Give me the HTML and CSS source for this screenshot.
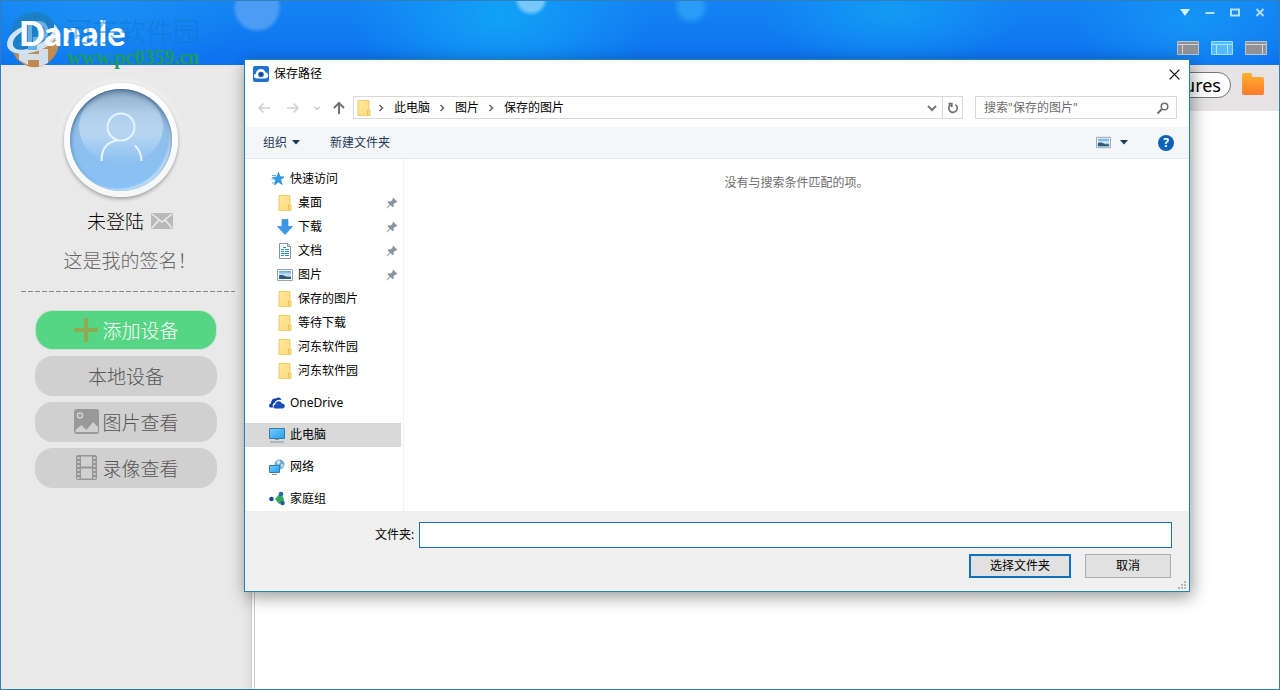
FILE: index.html
```html
<!DOCTYPE html>
<html lang="zh-CN">
<head>
<meta charset="utf-8">
<title>Danale</title>
<link rel="stylesheet" href="styles.css">
</head>
<body>
<svg class="defs" aria-hidden="true">
  <defs>
    <linearGradient id="g-folder" x1="0" y1="0" x2="1" y2="1"><stop offset="0" stop-color="#ffeaa0"/><stop offset="1" stop-color="#fcd978"/></linearGradient>
    <linearGradient id="g-orange" x1="0" y1="0" x2="0" y2="1"><stop offset="0" stop-color="#ffb12b"/><stop offset="1" stop-color="#ff7a2e"/></linearGradient>
    <linearGradient id="g-screen" x1="0" y1="0" x2="1" y2="1"><stop offset="0" stop-color="#6fcdfb"/><stop offset="1" stop-color="#2a9df0"/></linearGradient>
    <linearGradient id="g-photo" x1="0" y1="0" x2="0" y2="1"><stop offset="0" stop-color="#5f9edb"/><stop offset=".5" stop-color="#d8ecf7"/><stop offset="1" stop-color="#2d5f86"/></linearGradient>
    <linearGradient id="g-gloss" x1="0" y1="0" x2="0" y2="1"><stop offset="0" stop-color="#fff" stop-opacity=".1"/><stop offset=".6" stop-color="#fff" stop-opacity=".35"/><stop offset="1" stop-color="#fff" stop-opacity="0"/></linearGradient>
  </defs>
  <symbol id="folder" viewBox="0 0 16 16"><path d="M2 .5h11v9.500h1V15.500H2z" fill="url(#g-folder)" stroke="#e9cb6c"/><path d="M11.500 15V10.500h2" fill="none" stroke="#e6c25c"/></symbol>
  <symbol id="picture" viewBox="0 0 16 16"><path d="M.5 2.500h15v11H.5z" fill="#fff" stroke="#8fa3b5"/><path d="M2 4h12v8H2z" fill="url(#g-photo)"/><path d="M2 8.500c3-1 5 0 7 1s3 .2 5 .7V12H2z" fill="#2b5a7c"/></symbol>
  <symbol id="pin" viewBox="0 0 12 12"><path d="M7.300.8l4 4-1 .8-.7-.3-2 2 .1 2.200-1 .8-2.200-2.200L1 11.600l-.6-.5 3.300-3.700L1.500 5.200l.9-1 2.300.2 2-2-.3-.8z" fill="#8795a3"/></symbol>
  <symbol id="chev" viewBox="0 0 8 8"><path d="M2.500 1L5.500 4l-3 3" fill="none" stroke="#666" stroke-width="1.500"/></symbol>
</svg>

<div class="app">
  <header class="banner">
    <div class="brand">
      <svg class="mark" viewBox="0 0 58 58">
        <circle cx="29" cy="25" r="24" fill="#1c80c8"/>
        <path d="M8 42c14 3 32-4 46-18 2 14-5 26-17 31-12 4-23-2-29-13z" fill="#c08a50"/>
        <path d="M14 41h9v13l-9-5zM34 38h9v14l-9 4zM23 43h11v6H23z" fill="#d3deea"/>
        <path d="M2 34c0-10 9-16 18-19l2 3C13 22 7 28 8 34c2 8 17 5 28-2 9-6 14-12 13-19 8 6 3 16-8 23C26 45 4 46 2 34z" fill="#cfe5f7"/>
        <path d="M25 12h9c10 0 10 16 0 16h-4v9h-5z" fill="none" stroke="#67b0e2" stroke-width="4"/>
      </svg>
      <span class="brand-name">Danale</span>
      <span class="site-name">河东软件园</span>
      <span class="site-url">www.pc0359.cn</span>
    </div>
    <div class="controls">
      <div class="window-buttons">
        <button aria-label="菜单"><svg viewBox="0 0 12 12"><path d="M1 3h10L6 10z" fill="#d5f2ff"/></svg></button>
        <button aria-label="最小化"><svg viewBox="0 0 12 12"><path d="M1.500 7h9" stroke="#b8defa" stroke-width="2"/></svg></button>
        <button aria-label="最大化"><svg viewBox="0 0 12 12"><path d="M2 3.500h8v6H2z" fill="none" stroke="#b8defa" stroke-width="2"/></svg></button>
        <button aria-label="关闭"><svg viewBox="0 0 12 12"><path d="M2.500 3l7 7m0-7l-7 7" stroke="#b8defa" stroke-width="1.900"/></svg></button>
      </div>
      <div class="layout-buttons">
        <button aria-label="左侧栏"><svg viewBox="0 0 22 14"><path d="M.5.5h21v13H.5z" fill="#909296" stroke="#b9c4d0"/><path d="M1 3.500h20M5.500 4v9" stroke="#cfd6de"/></svg></button>
        <button aria-label="双侧栏"><svg viewBox="0 0 22 14"><path d="M.5.5h21v13H.5z" fill="#57bcff" stroke="#9bdcff"/><path d="M1 3.500h20M5.500 4v9M16.500 4v9" stroke="#b2e4ff"/></svg></button>
        <button aria-label="右侧栏"><svg viewBox="0 0 22 14"><path d="M.5.5h21v13H.5z" fill="#909296" stroke="#b9c4d0"/><path d="M1 3.500h20M17.500 4v9" stroke="#cfd6de"/></svg></button>
      </div>
    </div>
  </header>

  <div class="workspace">
    <aside class="sidebar">
      <div class="avatar"><svg viewBox="0 0 102 102"><ellipse cx="51" cy="38" rx="42" ry="37" fill="url(#g-gloss)" stroke="none"/><circle cx="51" cy="38" r="13.500"/><path d="M47 51.500C36 53 31.500 61 31.500 72M65 56.500c4 4 6.500 8 6.500 15.500"/></svg></div>
      <div class="user"><span>未登陆</span><svg viewBox="0 0 22 16"><rect width="22" height="16" rx="1" fill="#b9b9b9"/><path d="M1 1l10 8 10-8M1 15l7-8m13 8l-7-8" fill="none" stroke="#ececec" stroke-width="1.500"/></svg></div>
      <p class="signature">这是我的签名！</p>
      <hr class="rule">
      <nav class="actions">
        <button class="action primary"><svg viewBox="0 0 26 26"><path d="M13 1v24M1 13h24" stroke="#8fab54" stroke-width="4"/></svg>添加设备</button>
        <button class="action">本地设备</button>
        <button class="action"><svg viewBox="0 0 26 26"><rect x="1" y="0" width="25" height="25" rx="3" fill="#999"/><circle cx="7" cy="6.500" r="2.500" fill="#999" stroke="#d0d0d0" stroke-width="1.500"/><path d="M2.500 23v-2l6-5 5 5 6.500-8 5 5v5z" fill="#d0d0d0"/></svg>图片查看</button>
        <button class="action"><svg viewBox="0 0 26 26"><rect x="3" y="0" width="21" height="25" rx="2" fill="#969696"/><path d="M8 1.500h11v10H8zM8 13.500h11v10H8z" fill="#d0d0d0"/><path d="M5.500 2v22M21.500 2v22" stroke="#d0d0d0" stroke-width="2" stroke-dasharray="2 2"/></svg>录像查看</button>
      </nav>
    </aside>
    <main class="content">
      <div class="path-bar">
        <input class="path-input" aria-label="保存目录" value="Pictures">
        <button aria-label="打开目录"><svg viewBox="0 0 24 24"><path d="M1 3q0-2 2-2h6q2 0 2 2v2h10q2 0 2 2v14q0 2-2 2H3q-2 0-2-2z" fill="url(#g-orange)"/></svg></button>
      </div>
    </main>
  </div>

  <section class="dialog" role="dialog" aria-labelledby="dialog-title">
    <div class="title-bar">
      <svg class="icon" viewBox="0 0 16 16"><rect width="16" height="16" rx="2" fill="#1f72d0"/><path d="M4 12.500C.5 12.500 0 8.500 3 7.500c.5-5.500 8-6 9.500-1 4 .5 3.500 6-.5 6z" fill="#fff"/><circle cx="8" cy="8.500" r="2.800" fill="#1b5cad"/><circle cx="8" cy="8.500" r="1" fill="#10305c"/></svg>
      <h1 id="dialog-title">保存路径</h1>
      <button class="close" aria-label="关闭"><svg viewBox="0 0 12 12"><path d="M1.500 1.500l9 9M10.500 1.500l-9 9" stroke="#111" stroke-width="1.200"/></svg></button>
    </div>

    <div class="location">
      <div class="history">
        <button aria-label="后退"><svg viewBox="0 0 14 14"><path d="M13 7H2m4.500-4.500L2 7l4.500 4.500" stroke="#d0d0d0"/></svg></button>
        <button aria-label="前进"><svg viewBox="0 0 14 14"><path d="M1 7h11M7.500 2.500L12 7l-4.500 4.500" stroke="#d0d0d0"/></svg></button>
        <button class="recent" aria-label="最近"><svg viewBox="0 0 14 14"><path d="M4.500 6L7 8.500 9.500 6" stroke="#c8c8c8"/></svg></button>
        <button class="up" aria-label="上移"><svg viewBox="0 0 14 14"><path d="M7 13V2M2 7l5-5 5 5"/></svg></button>
      </div>
      <div class="crumbs">
        <svg class="icon"><use href="#folder"/></svg>
        <svg class="sep"><use href="#chev"/></svg><span>此电脑</span>
        <svg class="sep"><use href="#chev"/></svg><span>图片</span>
        <svg class="sep"><use href="#chev"/></svg><span>保存的图片</span>
        <button class="expand" aria-label="展开"><svg viewBox="0 0 14 14"><path d="M3 5l4 4 4-4" fill="none" stroke="#777" stroke-width="2"/></svg></button>
        <button class="refresh" aria-label="刷新"><svg viewBox="0 0 14 14"><path d="M9.300 3.600a4.200 4.200 0 1 1-4.800.2M2.500 2.700h3.300v3.600" fill="none" stroke="#707070" stroke-width="1.700"/></svg></button>
      </div>
      <div class="search">
        <input type="search" aria-label="搜索" placeholder='搜索"保存的图片"'>
        <svg viewBox="0 0 14 14"><circle cx="8.500" cy="5.500" r="3.300" fill="none" stroke="#707070" stroke-width="1.500"/><path d="M6 8l-4.500 4.500" stroke="#707070" stroke-width="2"/></svg>
      </div>
    </div>

    <div class="toolbar">
      <button>组织<svg class="caret" viewBox="0 0 8 5"><path d="M0 0h8L4 4.500z"/></svg></button>
      <button>新建文件夹</button>
      <div class="view-tools">
        <button aria-label="视图"><svg class="icon"><use href="#picture"/></svg></button>
        <button aria-label="更多视图"><svg class="caret" viewBox="0 0 8 5"><path d="M0 0h8L4 4.500z"/></svg></button>
        <button class="help" aria-label="帮助">?</button>
      </div>
    </div>

    <div class="browser">
      <nav class="tree">
        <ul>
          <li><svg class="icon" viewBox="0 0 16 16"><path d="M9.500 1.500l1.400 4.200 4.100.2-3.400 2.800 1.500 4.800-3.800-2.500-3.800 2.900 1.200-4.700L3.500 6.500l4.300-.5z" fill="#2f9ee8" stroke="#1676c4" stroke-width=".6"/><path d="M3 4.500h4M2.500 8h4M3 12h3" stroke="#58b3ee"/></svg>快速访问</li>
          <li class="child"><svg class="icon"><use href="#folder"/></svg>桌面<svg class="pin"><use href="#pin"/></svg></li>
          <li class="child"><svg class="icon" viewBox="0 0 16 16"><path d="M5 .5h6v7h4.500L8 15.500.5 7.500H5z" fill="#3b97e6" stroke="#2a7fcf" stroke-width=".6"/></svg>下载<svg class="pin"><use href="#pin"/></svg></li>
          <li class="child"><svg class="icon" viewBox="0 0 16 16"><path d="M2.500.5h8l3 3v12h-11z" fill="#fff" stroke="#8796a3"/><path d="M10.500.5v3h3" fill="none" stroke="#8796a3"/><path d="M4 6.500h3m1 0h4m-8 2h3m1 0h4m-8 2h8m-8 2h3m1 0h4M6 4.500h3" stroke="#2596b4"/></svg>文档<svg class="pin"><use href="#pin"/></svg></li>
          <li class="child"><svg class="icon"><use href="#picture"/></svg>图片<svg class="pin"><use href="#pin"/></svg></li>
          <li class="child"><svg class="icon"><use href="#folder"/></svg>保存的图片</li>
          <li class="child"><svg class="icon"><use href="#folder"/></svg>等待下载</li>
          <li class="child"><svg class="icon"><use href="#folder"/></svg>河东软件园</li>
          <li class="child"><svg class="icon"><use href="#folder"/></svg>河东软件园</li>
        </ul>
        <ul><li><svg class="icon" viewBox="0 0 16 16"><path d="M2 12.500C-.5 12.500-.5 9 2 8.500 2 5 4 3 7 3.500c2-2 5-1 5.500 1.500C9 4 6 6 5.500 8 3.500 8.500 3 11 4.500 12.500z" fill="#0f3fa6"/><path d="M6.500 13.500c-2.500 0-2.500-3.500-.2-4 .2-4 5.700-4.500 6.500-1 3.500-.3 4 4.500 1 5z" fill="#1b50b8"/></svg>OneDrive</li></ul>
        <ul><li class="selected"><svg class="icon" viewBox="0 0 16 16"><path d="M.5 1.500h15v10H.5z" fill="url(#g-screen)" stroke="#397aa8"/><path d="M6 12h4v1H6z" fill="#7b98ad"/><path d="M1 15h14" stroke="#7e95a8"/></svg>此电脑</li></ul>
        <ul><li><svg class="icon" viewBox="0 0 16 16"><circle cx="10.500" cy="5.500" r="5" fill="#6eabd0"/><path d="M8 2c2-2 4 0 3 2s-3 2-3 0zM12 5l3 1-2 3z" fill="#c9e5ef"/><path d="M.5 6.500h10v7H.5z" fill="url(#g-screen)" stroke="#397aa8"/><path d="M3 15.500h5" stroke="#7395ad"/></svg>网络</li></ul>
        <ul><li><svg class="icon" viewBox="0 0 16 16"><path d="M6 8l4-4.500c4 1 6 4 4 7.500l-4 2z" fill="#35a85a"/><circle cx="2.500" cy="8" r="2.300" fill="#164f92"/><circle cx="12" cy="3" r="2.300" fill="#2467a3"/><circle cx="13.500" cy="12" r="2.300" fill="#1c5e9d"/></svg>家庭组</li></ul>
      </nav>
      <p class="empty">没有与搜索条件匹配的项。</p>
    </div>

    <div class="footer">
      <div class="field"><label for="folder-name">文件夹:</label><input id="folder-name" type="text"></div>
      <div class="buttons"><button class="push default">选择文件夹</button><button class="push">取消</button></div>
      <svg class="grip" viewBox="0 0 9 9"><path d="M6 0h2v2H6zM3 3h2v2H3zM6 3h2v2H6zM0 6h2v2H0zM3 6h2v2H3zM6 6h2v2H6z" fill="#b8b8b8"/></svg>
    </div>
  </section>
</div>
</body>
</html>
```
FILE: styles.css
```css
* { box-sizing: border-box; }

body {
  margin: 0;
  font: 12px/16px "Noto Sans", "Noto Sans CJK SC", sans-serif;
  color: #000;
}

button, input { font: inherit; color: inherit; }

button {
  display: flex;
  align-items: center;
  justify-content: center;
  padding: 0;
  border: 0;
  background: none;
}

svg { display: block; flex: none; }
h1, p, ul { margin: 0; padding: 0; list-style: none; }
.defs { position: absolute; width: 0; height: 0; }
.icon { width: 16px; height: 16px; }

.app {
  position: relative;
  display: flex;
  flex-direction: column;
  min-height: 100vh;
  border: 1px solid #2f7fbd;
  background: #fff;
}

/* banner */
.banner {
  display: flex;
  justify-content: space-between;
  height: 64px;
  background:
    radial-gradient(circle at 256px 7px, #4a9cf5 0 20px, transparent 25px),
    radial-gradient(circle at 530px -2px, #74c8fa 0 12px, transparent 17px),
    radial-gradient(circle at 690px 6px, #2b9df6 0 10px, transparent 18px),
    radial-gradient(ellipse 150px 90px at 500px 15px, #12a2f7, transparent),
    radial-gradient(ellipse 130px 60px at 890px 10px, #129bf4, transparent),
    radial-gradient(ellipse 120px 60px at 1190px 20px, #1595f5, transparent),
    radial-gradient(ellipse 160px 80px at 90px 0, #1b90f4, transparent),
    linear-gradient(#1483f3, #0d72ef);
}

.brand {
  position: relative;
  width: 220px;
}

.mark { position: absolute; left: 4px; top: 10px; width: 58px; height: 58px; }

.brand-name {
  position: absolute;
  left: 18px;
  top: 20px;
  font: 900 34px/24px Lato, sans-serif;
  color: #fff;
}

.site-name {
  position: absolute;
  left: 64px;
  top: 14px;
  font: 27px/32px "Noto Sans CJK SC", sans-serif;
  color: #1079d0;
  opacity: .5;
  white-space: nowrap;
}

.site-url {
  position: absolute;
  left: 66px;
  top: 46px;
  font: bold 20px/20px "Liberation Serif", serif;
  color: #1c9a62;
}

.controls {
  display: flex;
  flex-direction: column;
  align-items: flex-end;
  gap: 23px;
  padding: 5px 12px 0 0;
}

.window-buttons { display: flex; gap: 13px; padding-right: 1px; }
.window-buttons svg { width: 12px; height: 12px; }
.layout-buttons { display: flex; gap: 12px; }
.layout-buttons svg { width: 22px; height: 14px; }

/* sidebar */
.workspace { display: flex; flex: 1; }

.sidebar {
  width: 254px;
  padding: 18px 16px 0 20px;
  border-right: 4px double #ccc;
  background: linear-gradient(90deg, #e9e9e9 96%, #dedede) padding-box, #fff;
}

.avatar {
  width: 114px;
  height: 114px;
  margin-left: 43px;
  padding: 6px;
  border-radius: 50%;
  background: linear-gradient(#fff, #f4f6f8);
  box-shadow: 0 2px 4px #999, 0 0 10px #fff;
}

.avatar svg {
  width: 102px;
  height: 102px;
  border-radius: 50%;
  background: linear-gradient(#7d9fbf, #97c0e6 25%, #8bbff0 60%, #89c2f5);
  box-shadow: inset 0 3px 5px #456b8c, inset -3px -2px 2px #c5e1fa;
  fill: none;
  stroke: #e3f3ff;
  stroke-width: 2;
}

.user {
  display: flex;
  align-items: center;
  justify-content: center;
  gap: 7px;
  margin-top: 12px;
  padding-left: 4px;
  font-size: 19px;
  line-height: 24px;
}

.user, .signature, .action { font-family: "Noto Sans CJK SC", sans-serif; font-weight: 300; }
.user svg { width: 22px; height: 16px; }

.signature {
  margin-top: 15px;
  padding-left: 4px;
  font-size: 19px;
  line-height: 24px;
  text-align: center;
  color: #666;
}

.rule {
  margin: 19px 0 18px;
  border: 0;
  height: 1px;
  background: repeating-linear-gradient(90deg, #888 0 5px, transparent 5px 7px);
}

.actions { display: flex; flex-direction: column; gap: 6px; padding: 0 18px 0 14px; }

.action {
  gap: 3px;
  height: 40px;
  border-radius: 18px;
  background: #d0d0d0;
  font-size: 19px;
  color: #555;
}

.action svg { width: 26px; height: 26px; }
.action.primary { border: 1px solid #c5e5d0; background: #56d584; color: #fff; }

/* content */
.content { flex: 1; }

.path-bar {
  display: flex;
  align-items: flex-start;
  justify-content: flex-end;
  gap: 10px;
  height: 46px;
  padding: 7px 14px 0;
  background: #e5e3e3;
}

.path-input {
  width: 240px;
  height: 26px;
  padding: 0 9px;
  border: 1px solid #777;
  border-radius: 13px;
  background: #fff;
  font-size: 18px;
  text-align: right;
}

.path-bar svg { width: 24px; height: 24px; }

/* dialog */
.dialog {
  position: absolute;
  left: 243px;
  right: 89px;
  top: 58px;
  border: 1px solid #2380bb;
  background: #fff;
  box-shadow: 2px 5px 16px rgba(0, 0, 0, .4);
}

.title-bar { display: flex; align-items: center; gap: 5px; height: 28px; padding: 0 8px; }
.title-bar h1 { font-size: 12px; font-weight: 400; line-height: 16px; }
.title-bar .close { margin-left: auto; }
.close svg { width: 13px; height: 13px; }

.location { display: flex; align-items: center; padding: 8px 12px; }
.history { display: flex; gap: 15px; width: 96px; flex: none; }
.history button { width: 14px; }
.history .recent { width: 8px; margin: 0 -4px 0 -2px; }
.history svg { width: 14px; height: 14px; fill: none; stroke-width: 1.5px; }
.history .up svg { stroke: #707070; stroke-width: 2px; }

.crumbs {
  display: flex;
  flex: 1;
  align-items: center;
  height: 23px;
  border: 1px solid #d9d9d9;
}

.crumbs .icon { margin: 0 5px 0 2px; }
.sep { width: 8px; height: 8px; margin-right: 9px; }
.crumbs span { margin-right: 8px; }
.expand { width: 20px; margin-left: auto; }
.refresh { width: 20px; height: 21px; border-left: 1px solid #d9d9d9; }
.expand svg, .refresh svg { width: 14px; height: 14px; }

.search {
  display: flex;
  align-items: center;
  width: 202px;
  height: 23px;
  margin-left: 12px;
  padding: 0 6px 0 8px;
  border: 1px solid #d9d9d9;
}

.search input { flex: 1; min-width: 0; padding: 0; border: 0; outline: 0; background: none; }
.search input::placeholder { color: #6d6d6d; }
.search svg { width: 14px; height: 14px; }

.toolbar {
  display: flex;
  align-items: center;
  gap: 30px;
  height: 32px;
  padding: 0 15px 0 18px;
  border-bottom: 1px solid #e6e9ec;
  background: #f5f6f7;
  color: #1e395b;
}

.toolbar button { gap: 5px; }
.caret { width: 8px; height: 5px; fill: #1e395b; }
.view-tools { display: flex; align-items: center; gap: 9px; margin-left: auto; }
.view-tools .icon { width: 15px; height: 15px; }

.toolbar .help {
  width: 16px;
  height: 16px;
  margin-left: 21px;
  border-radius: 50%;
  background: #0d63b8;
  color: #fff;
  font-weight: 700;
}

.browser { display: flex; height: 352px; }

.tree {
  display: flex;
  flex-direction: column;
  gap: 8px;
  width: 159px;
  padding: 8px 2px 0 0;
  border-right: 1px solid #f2f2f2;
  overflow: hidden;
}

.tree li { display: flex; align-items: center; gap: 5px; height: 24px; padding: 0 3px 0 24px; }
.tree .child { padding-left: 32px; }
.tree .selected { background: #d9d9d9; }
.pin { width: 12px; height: 12px; margin-left: auto; }

.empty { flex: 1; padding-top: 16px; text-align: center; color: #6d6d6d; }

.footer { position: relative; padding: 11px 17px 13px; background: #f0f0f0; }
.field { display: flex; align-items: center; gap: 5px; padding-left: 113px; }
.field input { flex: 1; height: 26px; border: 1px solid #1f6fb0; background: #fff; }
.buttons { display: flex; justify-content: flex-end; gap: 14px; padding: 6px 1px 0 0; }
.push { width: 86px; height: 24px; border: 1px solid #adadad; background: #e1e1e1; }
.push.default { width: 102px; border: 2px solid #0f70bd; }
.grip { position: absolute; right: 2px; bottom: 1px; width: 9px; height: 9px; }
```
